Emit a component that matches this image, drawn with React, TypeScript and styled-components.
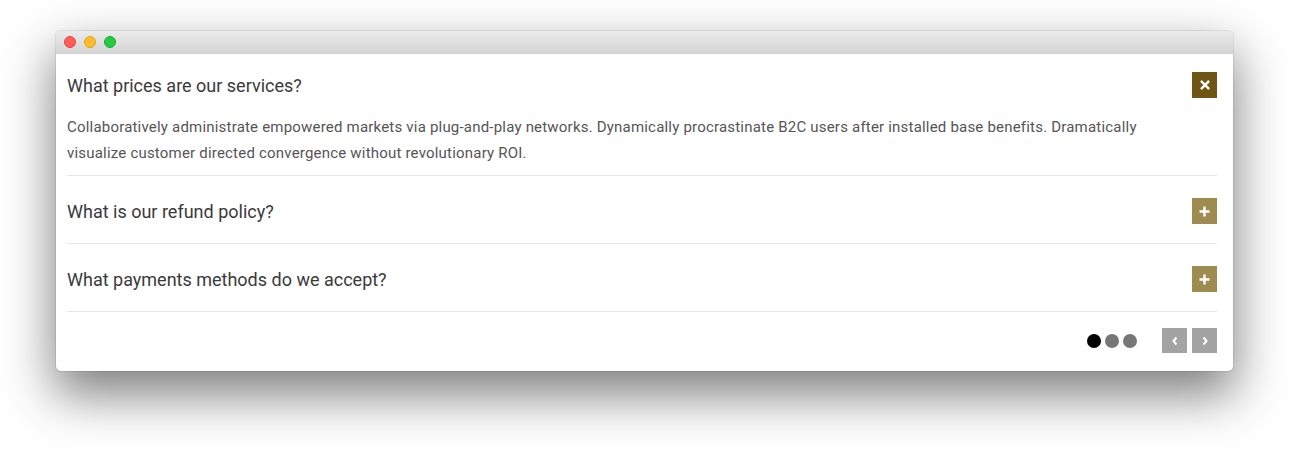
import React, { useState } from "react";
import styled, { createGlobalStyle } from "styled-components";

const Global = createGlobalStyle`
  html, body { margin: 0; padding: 0; background: #ffffff; }
  body { font-family: Roboto, "Liberation Sans", Arial, sans-serif; }
  * { box-sizing: border-box; }
`;

const Stage = styled.div`
  padding: 31px 56px 0 56px;
  width: 1289px;
  height: 451px;
  overflow: hidden;
`;

const Window = styled.div`
  width: 1177px;
  height: 340px;
  background: #fff;
  border-radius: 5px;
  box-shadow: 0 22px 50px 2px rgba(0, 0, 0, 0.5), 0 0 0 1px rgba(0, 0, 0, 0.08);
  overflow: hidden;
  display: flex;
  flex-direction: column;
`;

const TitleBar = styled.div`
  height: 23px;
  flex: none;
  background: linear-gradient(#ebebeb, #d5d5d5);
  border-bottom: 1px solid #cfcfcf;
  display: flex;
  align-items: center;
  gap: 8px;
  padding-left: 8px;
`;

const Light = styled.span<{ $c: string; $b: string }>`
  width: 12px;
  height: 12px;
  border-radius: 50%;
  background: ${(p) => p.$c};
  border: 0.5px solid ${(p) => p.$b};
`;

const Content = styled.div`
  padding: 17px 16px 0 11px;
  display: flex;
  flex-direction: column;
`;

const Item = styled.div<{ $first?: boolean }>`
  border-bottom: 1px solid #e6e6e6;
  padding: ${(p) => (p.$first ? "0 0 9px" : "21px 0 18px")};
`;

const Header = styled.div`
  height: 28px;
  display: flex;
  align-items: center;
  justify-content: space-between;
  cursor: pointer;
`;

const Question = styled.h3`
  margin: 0;
  font-size: 18px;
  font-weight: 400;
  color: #3a3a3a;
`;

const Toggle = styled.button<{ $open: boolean }>`
  width: 25px;
  height: 26px;
  border: 0;
  padding: 0;
  display: flex;
  align-items: center;
  justify-content: center;
  background: ${(p) => (p.$open ? "#705615" : "#9d8b4f")};
  color: #fff;
  cursor: pointer;
`;

const Answer = styled.p`
  margin: 15px 0 0;
  font-size: 15px;
  line-height: 26px;
  letter-spacing: 0.2px;
  color: #555;
  max-width: 1100px;
`;

const Footer = styled.div`
  display: flex;
  align-items: center;
  justify-content: flex-end;
  padding-top: 16px;
`;

const Dots = styled.div`
  display: flex;
  gap: 4px;
  margin-right: 25px;
`;

const Dot = styled.span<{ $active: boolean }>`
  width: 14px;
  height: 14px;
  border-radius: 50%;
  background: ${(p) => (p.$active ? "#000" : "#777")};
`;

const Nav = styled.div`
  display: flex;
  gap: 5px;
`;

const NavButton = styled.button`
  width: 25px;
  height: 25px;
  border: 0;
  padding: 0;
  background: #a3a3a3;
  display: flex;
  align-items: center;
  justify-content: center;
  cursor: pointer;
`;

const Cross = () => (
  <svg width="10" height="10" viewBox="0 0 10 10">
    <path d="M1.8 1.8 L8.2 8.2 M8.2 1.8 L1.8 8.2" stroke="#fff" strokeWidth="2.4" strokeLinecap="square" />
  </svg>
);

const Plus = () => (
  <svg width="11" height="11" viewBox="0 0 11 11">
    <path d="M5.5 0.5 V10.5 M0.5 5.5 H10.5" stroke="#fff" strokeWidth="2.4" />
  </svg>
);

const Chevron = ({ dir }: { dir: "l" | "r" }) => (
  <svg width="8" height="10" viewBox="0 0 8 10">
    <path
      d={dir === "l" ? "M5.5 1.5 L2.5 5 L5.5 8.5" : "M2.5 1.5 L5.5 5 L2.5 8.5"}
      stroke="#fff"
      strokeWidth="2"
      fill="none"
    />
  </svg>
);

const faqs = [
  {
    q: "What prices are our services?",
    a: "Collaboratively administrate empowered markets via plug-and-play networks. Dynamically procrastinate B2C users after installed base benefits. Dramatically visualize customer directed convergence without revolutionary ROI.",
  },
  {
    q: "What is our refund policy?",
    a: "Efficiently unleash cross-media information without cross-media value. Quickly maximize timely deliverables for real-time schemas.",
  },
  {
    q: "What payments methods do we accept?",
    a: "Completely synergize resource taxing relationships via premier niche markets. Professionally cultivate one-to-one customer service with robust ideas.",
  },
];

export default function App() {
  const [open, setOpen] = useState(0);
  return (
    <>
      <Global />
      <Stage>
        <Window>
          <TitleBar>
            <Light $c="#fe5f57" $b="#e2463f" />
            <Light $c="#febc2e" $b="#e1a116" />
            <Light $c="#28c840" $b="#14ae2c" />
          </TitleBar>
          <Content>
            {faqs.map((f, i) => (
              <Item key={i} $first={i === 0}>
                <Header onClick={() => setOpen(open === i ? -1 : i)}>
                  <Question>{f.q}</Question>
                  <Toggle $open={open === i}>{open === i ? <Cross /> : <Plus />}</Toggle>
                </Header>
                {open === i && <Answer>{f.a}</Answer>}
              </Item>
            ))}
            <Footer>
              <Dots>
                <Dot $active />
                <Dot $active={false} />
                <Dot $active={false} />
              </Dots>
              <Nav>
                <NavButton aria-label="previous">
                  <Chevron dir="l" />
                </NavButton>
                <NavButton aria-label="next">
                  <Chevron dir="r" />
                </NavButton>
              </Nav>
            </Footer>
          </Content>
        </Window>
      </Stage>
    </>
  );
}
